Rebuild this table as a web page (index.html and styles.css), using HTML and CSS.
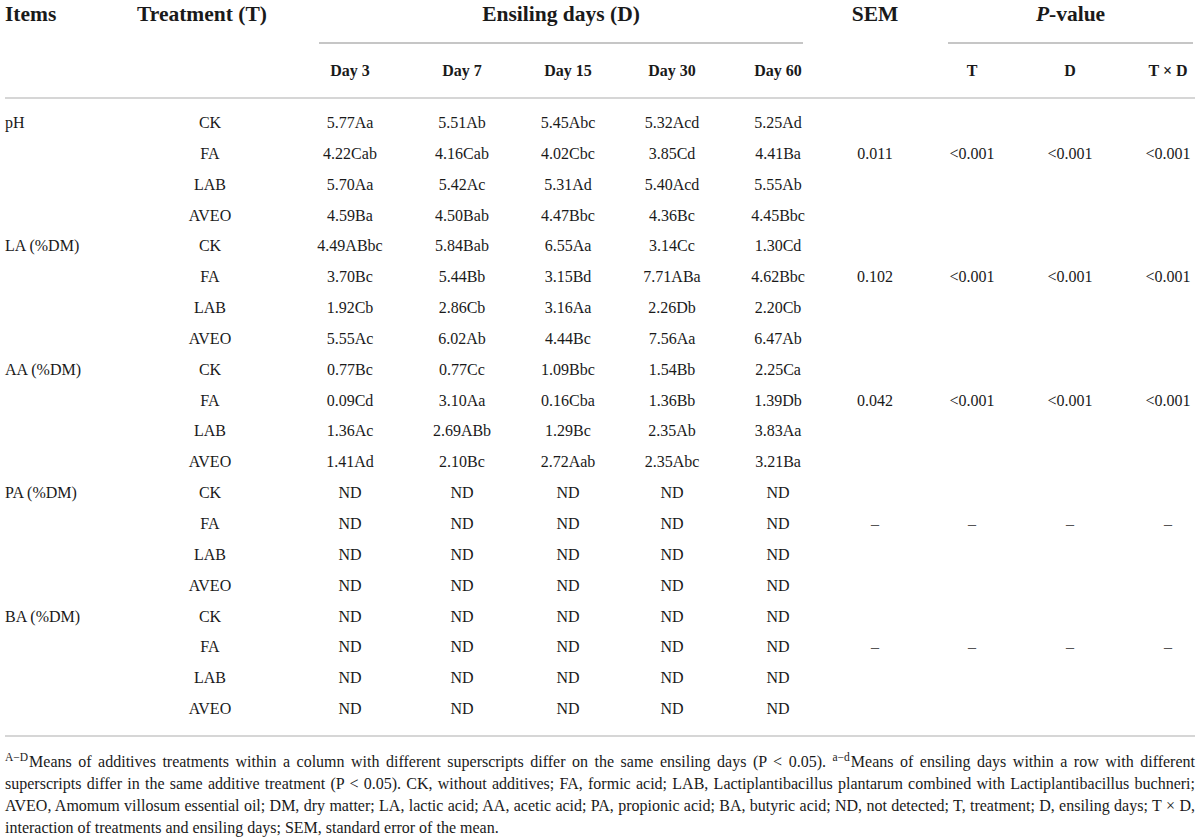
FILE: index.html
```html
<html><head>
<title>Silage fermentation table</title>

<link rel="stylesheet" href="styles.css">

</head><body>

<div class="tablebox">
<table class="silage">
  <colgroup>
    <col class="c-items"><col class="c-treat">
    <col class="c-d3"><col class="c-d7"><col class="c-d15"><col class="c-d30"><col class="c-d60">
    <col class="c-sem"><col class="c-t"><col class="c-d"><col class="c-td">
  </colgroup>
  <thead>
    <tr class="top">
      <th rowspan="2" class="items">Items</th>
      <th rowspan="2" class="treat">Treatment (T)</th>
      <th colspan="5"><div class="group days">Ensiling days (D)</div></th>
      <th rowspan="2" class="sem">SEM</th>
      <th colspan="3"><div class="group pval"><i>P</i>-value</div></th>
    </tr>
    <tr class="sub">
      <th>Day 3</th><th>Day 7</th><th>Day 15</th><th>Day 30</th><th>Day 60</th>
      <th>T</th><th>D</th><th class="td">T &times; D</th>
    </tr>
  </thead>
  <tbody>
    <tr class="first"><td class="item">pH</td><td class="trt">CK</td><td>5.77Aa</td><td>5.51Ab</td><td>5.45Abc</td><td>5.32Acd</td><td>5.25Ad</td><td></td><td></td><td></td><td class="td"></td></tr>
    <tr><td class="item"></td><td class="trt">FA</td><td>4.22Cab</td><td>4.16Cab</td><td>4.02Cbc</td><td>3.85Cd</td><td>4.41Ba</td><td>0.011</td><td>&lt;0.001</td><td>&lt;0.001</td><td class="td">&lt;0.001</td></tr>
    <tr><td class="item"></td><td class="trt">LAB</td><td>5.70Aa</td><td>5.42Ac</td><td>5.31Ad</td><td>5.40Acd</td><td>5.55Ab</td><td></td><td></td><td></td><td class="td"></td></tr>
    <tr><td class="item"></td><td class="trt">AVEO</td><td>4.59Ba</td><td>4.50Bab</td><td>4.47Bbc</td><td>4.36Bc</td><td>4.45Bbc</td><td></td><td></td><td></td><td class="td"></td></tr>

    <tr><td class="item">LA (%DM)</td><td class="trt">CK</td><td>4.49ABbc</td><td>5.84Bab</td><td>6.55Aa</td><td>3.14Cc</td><td>1.30Cd</td><td></td><td></td><td></td><td class="td"></td></tr>
    <tr><td class="item"></td><td class="trt">FA</td><td>3.70Bc</td><td>5.44Bb</td><td>3.15Bd</td><td>7.71ABa</td><td>4.62Bbc</td><td>0.102</td><td>&lt;0.001</td><td>&lt;0.001</td><td class="td">&lt;0.001</td></tr>
    <tr><td class="item"></td><td class="trt">LAB</td><td>1.92Cb</td><td>2.86Cb</td><td>3.16Aa</td><td>2.26Db</td><td>2.20Cb</td><td></td><td></td><td></td><td class="td"></td></tr>
    <tr><td class="item"></td><td class="trt">AVEO</td><td>5.55Ac</td><td>6.02Ab</td><td>4.44Bc</td><td>7.56Aa</td><td>6.47Ab</td><td></td><td></td><td></td><td class="td"></td></tr>

    <tr><td class="item">AA (%DM)</td><td class="trt">CK</td><td>0.77Bc</td><td>0.77Cc</td><td>1.09Bbc</td><td>1.54Bb</td><td>2.25Ca</td><td></td><td></td><td></td><td class="td"></td></tr>
    <tr><td class="item"></td><td class="trt">FA</td><td>0.09Cd</td><td>3.10Aa</td><td>0.16Cba</td><td>1.36Bb</td><td>1.39Db</td><td>0.042</td><td>&lt;0.001</td><td>&lt;0.001</td><td class="td">&lt;0.001</td></tr>
    <tr><td class="item"></td><td class="trt">LAB</td><td>1.36Ac</td><td>2.69ABb</td><td>1.29Bc</td><td>2.35Ab</td><td>3.83Aa</td><td></td><td></td><td></td><td class="td"></td></tr>
    <tr><td class="item"></td><td class="trt">AVEO</td><td>1.41Ad</td><td>2.10Bc</td><td>2.72Aab</td><td>2.35Abc</td><td>3.21Ba</td><td></td><td></td><td></td><td class="td"></td></tr>

    <tr><td class="item">PA (%DM)</td><td class="trt">CK</td><td>ND</td><td>ND</td><td>ND</td><td>ND</td><td>ND</td><td></td><td></td><td></td><td class="td"></td></tr>
    <tr><td class="item"></td><td class="trt">FA</td><td>ND</td><td>ND</td><td>ND</td><td>ND</td><td>ND</td><td class="dash">&ndash;</td><td class="dash">&ndash;</td><td class="dash">&ndash;</td><td class="td dash">&ndash;</td></tr>
    <tr><td class="item"></td><td class="trt">LAB</td><td>ND</td><td>ND</td><td>ND</td><td>ND</td><td>ND</td><td></td><td></td><td></td><td class="td"></td></tr>
    <tr><td class="item"></td><td class="trt">AVEO</td><td>ND</td><td>ND</td><td>ND</td><td>ND</td><td>ND</td><td></td><td></td><td></td><td class="td"></td></tr>

    <tr><td class="item">BA (%DM)</td><td class="trt">CK</td><td>ND</td><td>ND</td><td>ND</td><td>ND</td><td>ND</td><td></td><td></td><td></td><td class="td"></td></tr>
    <tr><td class="item"></td><td class="trt">FA</td><td>ND</td><td>ND</td><td>ND</td><td>ND</td><td>ND</td><td class="dash">&ndash;</td><td class="dash">&ndash;</td><td class="dash">&ndash;</td><td class="td dash">&ndash;</td></tr>
    <tr><td class="item"></td><td class="trt">LAB</td><td>ND</td><td>ND</td><td>ND</td><td>ND</td><td>ND</td><td></td><td></td><td></td><td class="td"></td></tr>
    <tr class="last"><td class="item"></td><td class="trt">AVEO</td><td>ND</td><td>ND</td><td>ND</td><td>ND</td><td>ND</td><td></td><td></td><td></td><td class="td"></td></tr>
  </tbody>
</table>

<p class="footnote">
<sup>A&minus;D</sup>Means of additives treatments within a column with different superscripts differ on the same ensiling days (P &lt; 0.05). <sup>a&minus;d</sup>Means of ensiling days within a row with different superscripts differ in the same additive treatment (P &lt; 0.05). CK, without additives; FA, formic acid; LAB, Lactiplantibacillus plantarum combined with Lactiplantibacillus buchneri; AVEO, Amomum villosum essential oil; DM, dry matter; LA, lactic acid; AA, acetic acid; PA, propionic acid; BA, butyric acid; ND, not detected; T, treatment; D, ensiling days; T&nbsp;&times;&nbsp;D, interaction of treatments and ensiling days; SEM, standard error of the mean.
</p>
</div>

</body></html>
```

FILE: styles.css
```css
body {
  margin:0;
  background-color:#ffffff;
  color:#1a1a1a;
  font-family:"Liberation Serif", "Times New Roman", serif;
}
div.tablebox {
  margin:0 5px;
}
table.silage {
  width:1190px;
  table-layout:fixed;
  border-collapse:collapse;
  font-size:16px;
}
col.c-items { width:132px; }
col.c-treat { width:157px; }
col.c-d3 { width:112px; }
col.c-d7 { width:112px; }
col.c-d15 { width:100px; }
col.c-d30 { width:108px; }
col.c-d60 { width:104px; }
col.c-sem { width:90px; }
col.c-t { width:104px; }
col.c-d { width:92px; }
col.c-td { width:79px; }

table.silage thead {
  border-bottom:2px solid #d6d6d6;
}
table.silage tbody {
  border-bottom:2px solid #d6d6d6;
}
table.silage th {
  padding:0;
  font-weight:bold;
  text-align:center;
}
table.silage tr.top th {
  font-size:21.5px;
  line-height:28px;
  vertical-align:top;
}
table.silage th.items {
  text-align:left;
}
table.silage th.treat {
  text-align:left;
}
div.group {
  padding-bottom:14px;
  border-bottom:2px solid #c6c6c6;
}
div.days {
  margin:0 27px 0 25px;
}
div.pval {
  margin:0 2px 0 28px;
}
table.silage tr.sub th {
  font-size:16px;
  height:53px;
  line-height:53px;
  vertical-align:middle;
}
table.silage th.td {
  padding-left:25px;
}
table.silage td {
  padding:0;
  line-height:30.84px;
  text-align:center;
  white-space:nowrap;
}
table.silage td.item {
  text-align:left;
}
table.silage td.trt {
  padding-right:11px;
}
table.silage td.td {
  padding-left:25px;
}
table.silage td.dash {
  color:#555555;
}
table.silage tr.first td {
  padding-top:9px;
}
table.silage tr.last td {
  padding-bottom:10px;
}
p.footnote {
  margin:14px 0 0 0;
  font-size:16px;
  line-height:22px;
  text-align:justify;
}
p.footnote sup {
  font-size:11.5px;
  vertical-align:baseline;
  position:relative;
  top:-6px;
  line-height:0;
  margin-right:1px;
}
```
